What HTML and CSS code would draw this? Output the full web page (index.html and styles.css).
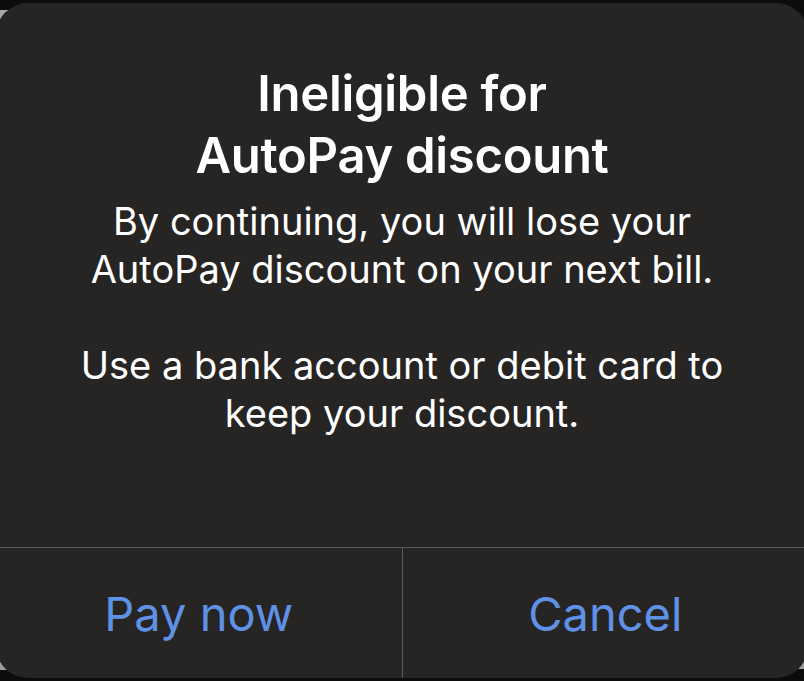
FILE: index.html
```html
<!DOCTYPE html>
<html lang="en">
<head>
  <meta charset="UTF-8" />
  <title>Ineligible for AutoPay discount</title>
  <link rel="stylesheet" href="styles.css">
</head>
<body>

<div class="alert">
  <div class="alert-content">
    <h2 class="alert-title">Ineligible for<br>AutoPay discount</h2>
    <p class="alert-message">By continuing, you will lose your<br>AutoPay discount on your next bill.</p>
    <p class="alert-message">Use a bank account or debit card to<br>keep your discount.</p>
  </div>
  <div class="alert-actions">
    <button class="alert-btn">Pay now</button>
    <button class="alert-btn">Cancel</button>
  </div>
</div>

</body>
</html>
```

FILE: styles.css
```css
html, body {
  margin: 0;
  height: 100%;
}
body {
  /* backdrop peeking out at the dialog corners */
  background:
    linear-gradient(#a5a5a5, #a5a5a5) 0 10px / 8px 9px no-repeat,
    linear-gradient(#9c9c9c, #9c9c9c) 0 661px / 9px 9px no-repeat,
    linear-gradient(#9c9c9c, #9c9c9c) 796px 661px / 8px 8px no-repeat,
    #0c0c0c;
  font-family: Inter, "Noto Sans", sans-serif;
  padding-top: 3px;
  box-sizing: border-box;
  overflow: hidden;
}
.alert {
  margin: 0 -4px;
  height: 675px;
  background: #272524;
  border-radius: 32px;
  display: flex;
  flex-direction: column;
  color: #fff;
  text-align: center;
}
.alert-content {
  flex: 1;
  padding-top: 60px;
}
.alert-title {
  margin: 0 0 10px;
  font-size: 49px;
  font-weight: 600;
  line-height: 62px;
  letter-spacing: -0.3px;
}
.alert-message {
  margin: 0 0 48px;
  font-size: 38px;
  line-height: 48px;
  font-weight: 400;
}
.alert-actions {
  display: flex;
  height: 130px;
  border-top: 1px solid #5c5a59;
}
.alert-btn {
  flex: 1;
  background: none;
  border: none;
  font-family: inherit;
  font-size: 47px;
  color: #5f91e6;
  padding: 0;
}
.alert-btn + .alert-btn {
  border-left: 1px solid #5c5a59;
}
```
